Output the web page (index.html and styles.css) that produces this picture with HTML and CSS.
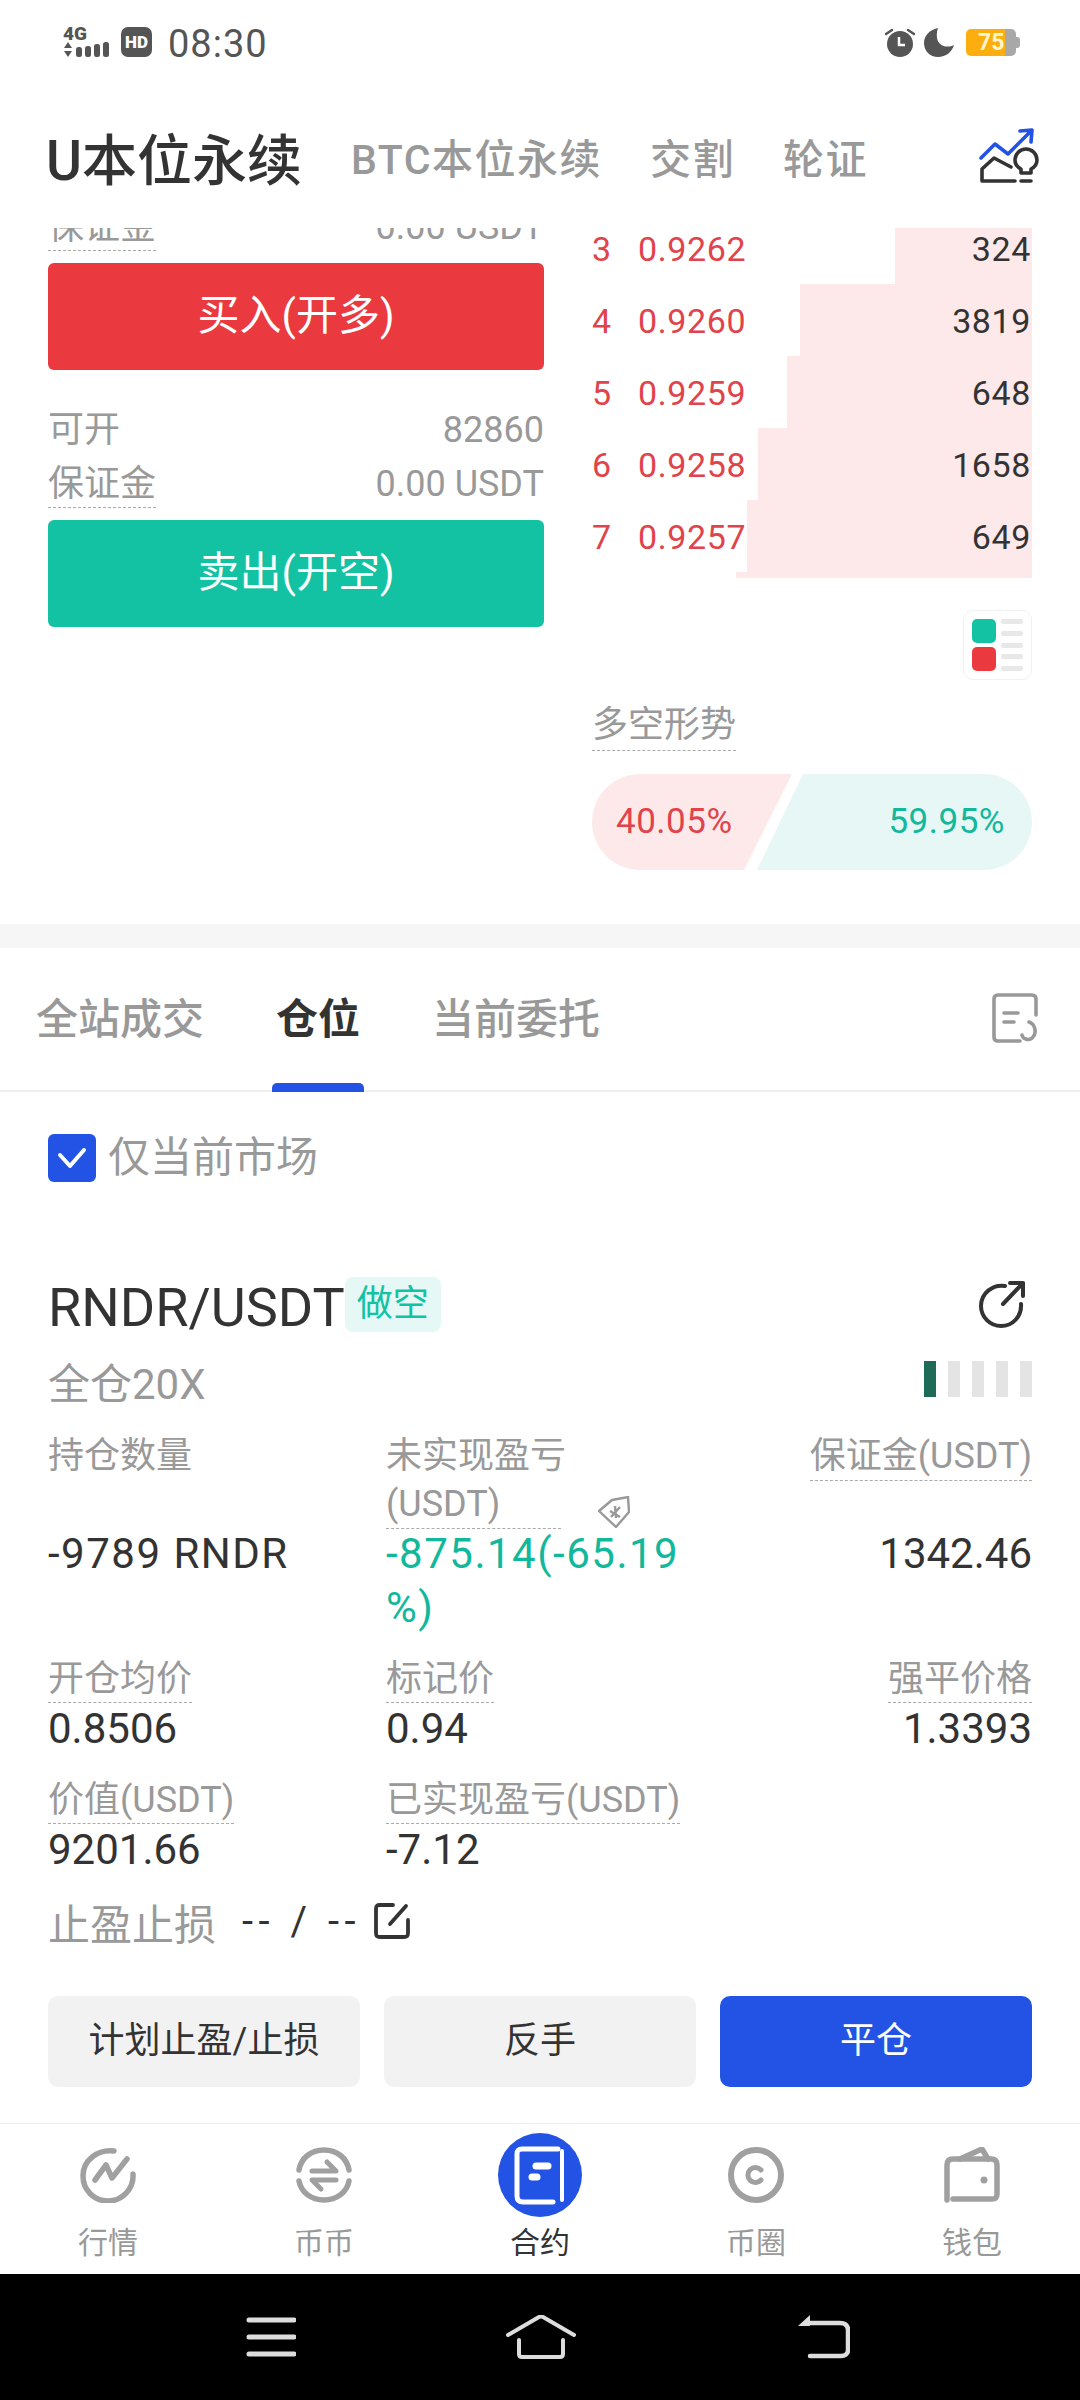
FILE: index.html
```html
<!DOCTYPE html>
<html lang="zh-CN">
<head>
  <meta charset="UTF-8" />
  <meta name="viewport" content="width=device-width, initial-scale=1.0"/>
  <title>U本位永续</title>
  <link rel="stylesheet" href="styles.css">
</head>
<body>
  <!-- Status bar -->
  <div class="status">
    <div class="signal">
      <span class="net">4G</span>
      <svg width="47" height="15" viewBox="0 0 47 15"><path d="M5 0l4 6H1zM5 15l4-6H1z" fill="#555"/><rect x="13" y="5" width="6" height="10" rx="2.500" fill="#555"/><rect x="22" y="4" width="6" height="11" rx="2.500" fill="#555"/><rect x="31" y="2" width="6" height="13" rx="2.500" fill="#555"/><rect x="40" y="0" width="6" height="15" rx="2.500" fill="#555"/></svg>
    </div>
    <span class="hd">HD</span>
    <span class="clock">08:30</span>
    <div class="status-right">
      <svg width="30" height="30" viewBox="0 0 30 30"><circle cx="15" cy="17" r="13" fill="#555"/><path d="M14 10v8h6" fill="none" stroke="#fff" stroke-width="2.5"/><path d="M1 7l6-4M23 3l6 4" stroke="#555" stroke-width="2.5" stroke-linecap="round"/></svg>
      <svg width="30" height="30" viewBox="0 0 30 30"><path d="M14 1C5 3 0 9 0 16c0 8 6 14 14 14 8 0 14-5 16-12-8 4-16 0-17-7-.5-4 0-7 1-10z" fill="#555"/></svg>
      <div class="battery">75</div>
    </div>
  </div>

  <!-- Header tabs -->
  <div class="header">
    <span class="title">U本位永续</span>
    <span class="head-tab">BTC本位永续</span>
    <span class="head-tab">交割</span>
    <span class="head-tab">轮证</span>
    <svg class="head-icon" width="62" height="62" viewBox="38 26 62 62" fill="none" stroke-width="3.6" stroke-linecap="round" stroke-linejoin="round">
      <path d="M41 57l14-14 13 10 22-22M80 30l12-1-1 12" stroke="#2353e5"/>
      <path d="M71 66L54 57 42 68v12h33M81 80h10" stroke="#333"/>
      <path d="M81 72v-4c-4-2-6-5-6-9 0-6 5-11 11-11s11 5 11 11c0 4-2 7-6 9v4z" stroke="#333"/>
    </svg>
  </div>

  <div class="main">
    <!-- Trade panel and order book -->
    <div class="market">
      <div class="trade">
        <div class="side-row"><span class="dashed">保证金</span><span>0.00 USDT</span></div>
        <div class="trade-btn buy">买入(开多)</div>
        <div class="side-row"><span>可开</span><span>82860</span></div>
        <div class="side-row"><span class="dashed">保证金</span><span>0.00 USDT</span></div>
        <div class="trade-btn sell">卖出(开空)</div>
      </div>
      <div class="book">
        <div class="book-row"><div class="depth" style="width:137px"></div><span class="num">3</span><span class="price">0.9262</span><span class="qty">324</span></div>
        <div class="book-row"><div class="depth" style="width:232px"></div><span class="num">4</span><span class="price">0.9260</span><span class="qty">3819</span></div>
        <div class="book-row"><div class="depth" style="width:245px"></div><span class="num">5</span><span class="price">0.9259</span><span class="qty">648</span></div>
        <div class="book-row"><div class="depth" style="width:274px"></div><span class="num">6</span><span class="price">0.9258</span><span class="qty">1658</span></div>
        <div class="book-row"><div class="depth" style="width:285px"></div><span class="num">7</span><span class="price">0.9257</span><span class="qty">649</span></div>
        <div class="book-row next"><div class="depth" style="width:296px"></div></div>

        <div class="layout-btn">
          <div class="layout-col"><span class="block green"></span><span class="block red"></span></div>
          <div class="layout-lines"><i></i><i></i><i></i><i></i><i></i></div>
        </div>

        <div class="trend-title"><span class="dashed">多空形势</span></div>
        <div class="trend">
          <div class="trend-long">40.05%</div>
          <div class="trend-short">59.95%</div>
        </div>
      </div>
    </div>

    <div class="band"></div>

    <!-- Order tabs -->
    <div class="tabs">
      <span class="tab">全站成交</span>
      <span class="tab active">仓位</span>
      <span class="tab">当前委托</span>
      <svg class="tabs-icon" width="46" height="50" viewBox="0 0 46 50" fill="none" stroke="#999" stroke-width="3.6" stroke-linecap="round">
        <path d="M44 22V6c0-2.500-1.500-4-4-4H6C3.500 2 2 3.500 2 6v38c0 2.500 1.500 4 4 4h22M12 20h14M12 29h10"/>
        <path d="M37 29c6 2 8 10 4 15-3 4-10 3-11-2"/>
      </svg>
    </div>

    <div class="only-market">
      <span class="check"><svg width="30" height="24" viewBox="0 0 30 24" fill="none"><path d="M3 9l10 11L27 4" stroke="#fff" stroke-width="4" stroke-linecap="round" stroke-linejoin="round"/></svg></span>
      <span>仅当前市场</span>
    </div>

    <!-- Position card -->
    <div class="position">
      <div class="pos-head">
        <span class="symbol">RNDR/USDT</span>
        <span class="pos-tag">做空</span>
        <svg class="pos-share" width="48" height="48" viewBox="0 0 48 48" fill="none" stroke="#333" stroke-width="4" stroke-linecap="round" stroke-linejoin="round">
          <path d="M27 6C15 4 3 13 3 26c0 11 9 20 20 20 12 0 21-10 20-22"/>
          <path d="M25 24L45 3M32 3h13v13"/>
        </svg>
      </div>
      <div class="pos-sub">
        <span>全仓20X</span>
        <div class="risk"><i class="on"></i><i></i><i></i><i></i><i></i></div>
      </div>

      <div class="stat-grid first">
        <div class="stat-label">持仓数量</div>
        <div class="stat-label pnl-label">
          <span class="dashed pnl-text">未实现盈亏<br>(USDT)</span>
          <svg class="pnl-tag" width="32" height="32" viewBox="0 0 32 32" fill="none" stroke="#999" stroke-width="2.400" stroke-linejoin="round"><path d="M1 15L14 4l16-3 1 15-13 15z"/><path d="M12 15l10 6M22 11l-9 10M17 10l1 12"/></svg>
        </div>
        <div class="stat-label right"><span class="dashed">保证金(USDT)</span></div>
        <div class="stat-value big">-9789 RNDR</div>
        <div class="stat-value big up">-875.14(-65.19<br>%)</div>
        <div class="stat-value big right">1342.46</div>
      </div>

      <div class="stat-grid second">
        <div><div class="stat-label"><span class="dashed">开仓均价</span></div><div class="stat-value">0.8506</div></div>
        <div><div class="stat-label"><span class="dashed">标记价</span></div><div class="stat-value">0.94</div></div>
        <div class="right"><div class="stat-label"><span class="dashed">强平价格</span></div><div class="stat-value">1.3393</div></div>
      </div>

      <div class="stat-grid third">
        <div><div class="stat-label"><span class="dashed">价值(USDT)</span></div><div class="stat-value">9201.66</div></div>
        <div><div class="stat-label"><span class="dashed">已实现盈亏(USDT)</span></div><div class="stat-value">-7.12</div></div>
      </div>

      <div class="tp-sl">
        <span class="tp-label">止盈止损</span>
        <span class="tp-value">-- / --</span>
        <svg width="36" height="36" viewBox="0 0 36 36" fill="none" stroke="#333" stroke-width="3.8" stroke-linecap="round"><path d="M19 2H6C3 2 2 3 2 6v24c0 3 1 4 4 4h24c3 0 4-1 4-4V17"/><path d="M16 21L32 3"/></svg>
      </div>

      <div class="actions">
        <div class="action">计划止盈/止损</div>
        <div class="action">反手</div>
        <div class="action primary">平仓</div>
      </div>
    </div>
  </div>

  <!-- Bottom nav -->
  <div class="nav">
    <div class="nav-item">
      <div class="nav-icon"><svg width="56" height="56" viewBox="0 0 56 56" fill="none" stroke="#a0a0a0" stroke-width="5.500" stroke-linecap="round" stroke-linejoin="round"><path d="M34 4C18 2 3 13 3 29c0 14 11 25 25 25 14 0 26-12 25-27"/><path d="M15 33l11-15 6 13 15-19"/></svg></div>
      <span class="nav-label">行情</span>
    </div>
    <div class="nav-item">
      <div class="nav-icon"><svg width="56" height="56" viewBox="0 0 56 56" fill="none" stroke="#a0a0a0" stroke-width="5.500" stroke-linecap="round" stroke-linejoin="round"><path d="M3 23C5 11 15 3 28 3s23 8 25 20M3 34c2 11 12 19 25 19s23-8 25-19"/><path d="M16 24h24l-9-9M40 33H16l9 9" stroke-width="5"/></svg></div>
      <span class="nav-label">币币</span>
    </div>
    <div class="nav-item active">
      <div class="nav-icon circle"><svg width="84" height="84" viewBox="0 0 84 84" fill="none" stroke="#fff" stroke-linecap="round"><path d="M60 16H24c-4 0-5 2-5 5v42c0 4 2 6 6 6h30" stroke-width="5"/><path d="M64 18v49" stroke-width="4"/><path d="M38 33h12" stroke-width="7"/><path d="M34 44h5" stroke-width="7"/></svg></div>
      <span class="nav-label">合约</span>
    </div>
    <div class="nav-item">
      <div class="nav-icon"><svg width="56" height="56" viewBox="0 0 56 56" fill="none" stroke="#a0a0a0" stroke-width="6" stroke-linecap="round"><circle cx="28" cy="28" r="25"/><path d="M33 23a7.500 7.500 0 1 0 0 10" stroke-width="5"/></svg></div>
      <span class="nav-label">币圈</span>
    </div>
    <div class="nav-item">
      <div class="nav-icon"><svg width="56" height="56" viewBox="0 0 56 56" fill="none" stroke="#a0a0a0" stroke-width="5.500" stroke-linecap="round" stroke-linejoin="round"><path d="M3 53V18c0-4 2-6 6-6h38c4 0 6 2 6 6v29c0 4-2 5-5 5H9"/><path d="M16 12L38 2l6 10"/><circle cx="40" cy="33" r="3.500" fill="#a0a0a0" stroke="none"/></svg></div>
      <span class="nav-label">钱包</span>
    </div>
  </div>

  <!-- System navigation -->
  <div class="sysbar">
    <svg class="sys-menu" width="50" height="44" viewBox="0 0 50 44" fill="none" stroke="#ddd" stroke-width="5" stroke-linecap="round"><path d="M3 5h45M3 22h45M3 39h45"/></svg>
    <svg class="sys-home" width="70" height="44" viewBox="0 0 70 44" fill="none" stroke="#ddd" stroke-width="4" stroke-linecap="round" stroke-linejoin="round"><path d="M2 20L33 2c1-.5 3-.5 4 0l31 18"/><path d="M13 25v14c0 2 1 3 3 3h38c2 0 3-1 3-3V25"/></svg>
    <svg class="sys-back" width="52" height="44" viewBox="0 0 52 44" fill="none"><path d="M12 0L0 11h12z" fill="#ddd"/><path d="M10 8h32c5 0 8 2 8 7v20c0 4-3 6-7 6H12" stroke="#ddd" stroke-width="4.500" stroke-linecap="round"/></svg>
  </div>
</body>
</html>
```

FILE: styles.css
```css
* {
  box-sizing: border-box;
}

body {
  margin: 0;
  width: 1080px;
  height: 2400px;
  display: flex;
  flex-direction: column;
  background: #fff;
  color: #333;
  font-family: Roboto, "Noto Sans CJK SC", sans-serif;
  overflow: hidden;
}

/* status bar */
.status {
  height: 70px;
  padding: 25px 60px 0 63px;
  display: flex;
  align-items: flex-start;
  color: #555;
}

.signal {
  width: 47px;
  display: flex;
  flex-direction: column;
}

.net {
  font-size: 19px;
  line-height: 17px;
  font-weight: 900;
}

.hd {
  width: 31px;
  height: 30px;
  margin: 2px 0 0 11px;
  border-radius: 7px;
  background: #555;
  color: #fff;
  font-size: 17px;
  font-weight: 900;
  line-height: 30px;
  text-align: center;
}

.clock {
  margin-left: 16px;
  font-size: 38px;
  letter-spacing: 1px;
  line-height: 38px;
}

.status-right {
  margin-left: auto;
  display: flex;
  align-items: center;
  gap: 9px;
  padding-top: 2px;
}

.battery {
  position: relative;
  width: 50px;
  height: 27px;
  margin: 0 4px 0 3px;
  border-radius: 5px;
  background: linear-gradient(to right, #fdae0f 39px, #a8a8a8 39px);
  color: #fff5cf;
  font-size: 23px;
  font-weight: 700;
  line-height: 27px;
  padding-left: 12px;
}

.battery::after {
  content: "";
  position: absolute;
  right: -4px;
  top: 8px;
  width: 4px;
  height: 11px;
  border-radius: 0 3px 3px 0;
  background: #a8a8a8;
}

/* header */
.header {
  height: 158px;
  padding: 14px 40px 0 46px;
  display: flex;
  align-items: center;
}

.title {
  font-size: 55px;
  font-weight: 500;
  margin-right: 49px;
}

.head-tab {
  font-size: 41px;
  font-weight: 500;
  letter-spacing: 1.500px;
  color: #999;
  margin-right: 48px;
}

.head-icon {
  margin-left: auto;
  margin-top: 4px;
}

.main {
  flex: 1;
  min-height: 0;
  overflow: hidden;
  border-bottom: 1px solid #eee;
}

/* market section */
.market {
  margin-top: -28px;
  padding: 0 48px 54px;
  display: flex;
  justify-content: space-between;
}

.trade {
  width: 496px;
  font-size: 36px;
  color: #999;
}

.side-row {
  height: 51px;
  margin-top: 3px;
  display: flex;
  justify-content: space-between;
  line-height: 54px;
}

.side-row:first-child {
  margin-top: 0;
}

.dashed {
  display: inline-block;
  border-bottom: 1px dashed #aaa;
}

.side-row .dashed {
  height: 51px;
}

.trade-btn {
  height: 107px;
  margin: 12px 0 33px;
  border-radius: 6px;
  color: #fff;
  font-size: 42px;
  line-height: 105px;
  text-align: center;
}

.buy {
  background: #ea3a40;
}

.sell {
  background: #12c2a3;
}

.book {
  width: 440px;
  padding-top: 12px;
}

.book-row {
  position: relative;
  height: 72px;
  padding-top: 2px;
  display: flex;
  align-items: center;
  font-size: 34px;
  letter-spacing: .6px;
}

.book-row.next {
  height: 6px;
}

.depth {
  position: absolute;
  top: 0;
  right: 0;
  bottom: 0;
  background: #fde9e9;
}

.num,
.price,
.qty {
  position: relative;
}

.num {
  width: 46px;
  color: #e0434b;
}

.price {
  color: #e0434b;
}

.qty {
  margin-left: auto;
  padding-right: 1px;
  color: #333;
}

.layout-btn {
  width: 69px;
  height: 70px;
  margin: 32px 0 0 auto;
  padding: 8px;
  display: flex;
  justify-content: space-between;
  border: 1px solid #f1f1f1;
  border-radius: 10px;
}

.layout-col {
  display: flex;
  flex-direction: column;
  justify-content: space-between;
}

.block {
  width: 24px;
  height: 24px;
  border-radius: 5px;
}

.block.green {
  background: #12c2a3;
}

.block.red {
  background: #ea3a40;
}

.layout-lines {
  display: flex;
  flex-direction: column;
  justify-content: space-between;
}

.layout-lines i {
  display: block;
  width: 22px;
  height: 5px;
  border-radius: 2px;
  background: #e8e8e8;
}

.trend-title {
  height: 50px;
  margin-top: 20px;
  font-size: 36px;
  line-height: 50px;
  color: #999;
}

.trend {
  height: 96px;
  margin-top: 24px;
  display: flex;
  font-size: 35px;
  letter-spacing: .5px;
  line-height: 96px;
}

.trend-long {
  width: 200px;
  padding-left: 24px;
  border-radius: 48px 0 0 48px;
  background: #fde9e9;
  color: #e0434b;
  clip-path: polygon(0 0, 100% 0, 76% 100%, 0 100%);
}

.trend-short {
  flex: 1;
  margin-left: -35px;
  padding-right: 27px;
  border-radius: 0 48px 48px 0;
  background: #e6f7f5;
  color: #12b89b;
  text-align: right;
  clip-path: polygon(46px 0, 100% 0, 100% 100%, 0 100%);
}

.band {
  height: 24px;
  background: #f6f6f6;
}

/* order tabs */
.tabs {
  position: relative;
  height: 144px;
  padding: 0 42px 0 36px;
  display: flex;
  align-items: center;
  gap: 72px;
  border-bottom: 2px solid #eee;
  font-size: 42px;
  color: #999;
}

.tab {
  position: relative;
  font-weight: 500;
  margin-bottom: 8px;
}

.tab.active {
  color: #333;
  font-weight: 700;
}

.tab.active::after {
  content: "";
  position: absolute;
  left: -4px;
  right: -4px;
  bottom: -46px;
  height: 9px;
  border-radius: 5px 5px 0 0;
  background: #2353e5;
}

.tabs-icon {
  margin-left: auto;
  margin-bottom: 2px;
}

.only-market {
  margin: 42px 0 0 48px;
  display: flex;
  align-items: center;
  gap: 12px;
  font-size: 42px;
  line-height: 48px;
  color: #999;
}

.check {
  width: 48px;
  height: 48px;
  display: flex;
  align-items: center;
  justify-content: center;
  border-radius: 6px;
  background: #2353e5;
}

/* position card */
.position {
  margin-top: 93px;
  padding: 0 48px;
}

.pos-head {
  height: 64px;
  display: flex;
  align-items: center;
}

.symbol {
  font-size: 54px;
}

.pos-tag {
  width: 96px;
  height: 55px;
  margin: -6px 0 0 0;
  border-radius: 8px;
  background: #e6f8f5;
  color: #12c2a3;
  font-size: 36px;
  line-height: 54px;
  text-align: center;
}

.pos-share {
  margin: -6px 6px 0 auto;
}

.pos-sub {
  height: 50px;
  margin-top: 20px;
  display: flex;
  justify-content: space-between;
  font-size: 42px;
  line-height: 52px;
  color: #999;
}

.risk {
  display: flex;
  gap: 12px;
  height: 36px;
  margin-top: 2px;
}

.risk i {
  display: block;
  width: 12px;
  background: #e4e4e4;
}

.risk i.on {
  background: #1e6b58;
}

.stat-grid {
  display: grid;
  grid-template-columns: 338px 1fr auto;
  align-items: start;
}

.stat-grid.first {
  margin-top: 23px;
}

.stat-grid.second {
  margin-top: 19px;
}

.stat-grid.third {
  margin-top: 21px;
}

.stat-label {
  font-size: 36px;
  line-height: 49px;
  color: #999;
}

.stat-label .dashed {
  line-height: 48px;
}

.stat-grid.second .dashed,
.stat-grid.third .dashed {
  padding-top: 3px;
  line-height: 45px;
}

.pnl-label {
  position: relative;
}

.pnl-text {
  width: 175px;
  white-space: nowrap;
}

.pnl-tag {
  position: absolute;
  left: 212px;
  top: 64px;
}

.stat-value {
  font-size: 42px;
  line-height: 50px;
}

.stat-value.big {
  line-height: 54px;
  margin-top: -2px;
  letter-spacing: 1.500px;
}

.stat-value.right {
  letter-spacing: 0;
}

.up {
  color: #12b89b;
}

.right {
  text-align: right;
}

.tp-sl {
  height: 50px;
  margin-top: 21px;
  display: flex;
  align-items: center;
}

.tp-label {
  font-size: 42px;
  color: #999;
}

.tp-value {
  margin: 0 13px 0 26px;
  font-size: 40px;
  letter-spacing: 5.500px;
}

.actions {
  margin-top: 50px;
  display: grid;
  grid-template-columns: repeat(3, 1fr);
  gap: 24px;
}

.action {
  height: 91px;
  border-radius: 10px;
  background: #f2f2f2;
  font-size: 36px;
  line-height: 91px;
  text-align: center;
}

.action.primary {
  background: #2353e5;
  color: #fff;
}

/* bottom nav */
.nav {
  height: 150px;
  padding-top: 9px;
  display: grid;
  grid-template-columns: repeat(5, 1fr);
}

.nav-item {
  display: flex;
  flex-direction: column;
  align-items: center;
  color: #999;
}

.nav-item.active {
  color: #333;
}

.nav-icon {
  width: 84px;
  height: 84px;
  display: flex;
  align-items: center;
  justify-content: center;
}

.nav-icon.circle {
  border-radius: 50%;
  background: #2353e5;
}

.nav-label {
  font-size: 30px;
  line-height: 34px;
  margin-top: 9px;
}

/* system bar */
.sysbar {
  height: 126px;
  flex: none;
  padding: 41px 0 0 246px;
  display: flex;
  align-items: flex-start;
  background: #000;
}

.sys-home {
  margin-left: 210px;
}

.sys-back {
  margin-left: 222px;
}
```
